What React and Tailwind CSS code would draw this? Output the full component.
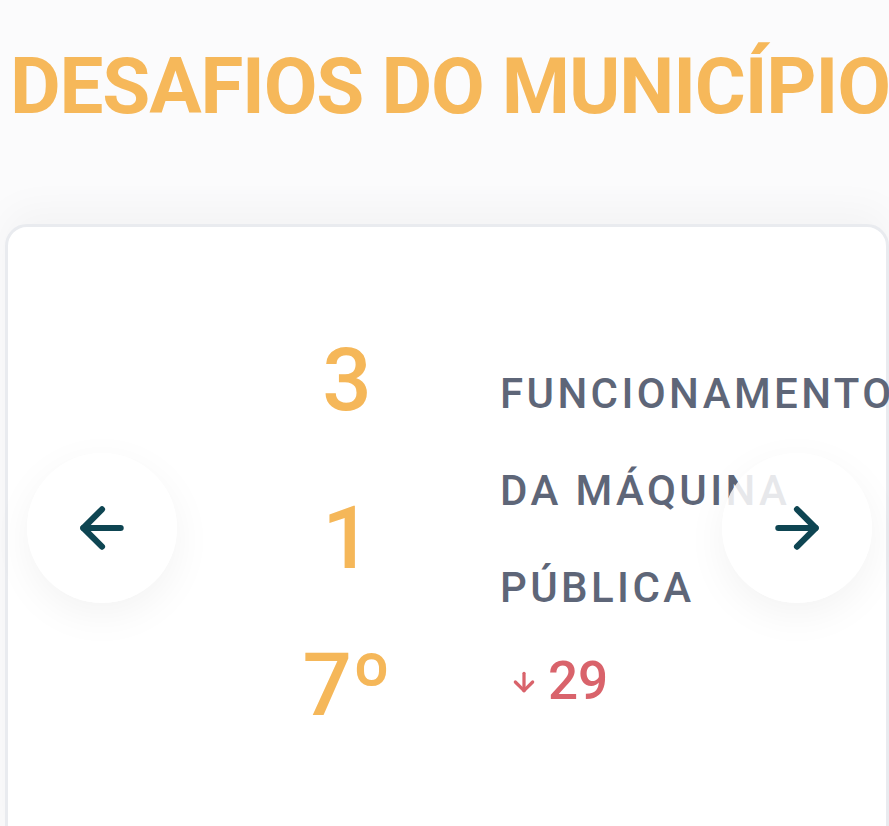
import React from "react";

function ArrowLeftIcon() {
  return (
    <svg width="64" height="64" viewBox="0 0 24 24" fill="none" stroke="#0e4552" strokeWidth="2.3" strokeLinecap="round" strokeLinejoin="round">
      <path d="M19 12H5" />
      <path d="M12 19l-7-7 7-7" />
    </svg>
  );
}

function ArrowRightIcon() {
  return (
    <svg width="64" height="64" viewBox="0 0 24 24" fill="none" stroke="#0e4552" strokeWidth="2.3" strokeLinecap="round" strokeLinejoin="round">
      <path d="M5 12h14" />
      <path d="M12 5l7 7-7 7" />
    </svg>
  );
}

function DownIcon() {
  return (
    <svg width="26" height="22" viewBox="0 0 24 20" fill="none" stroke="#d9636b" strokeWidth="3" strokeLinecap="round" strokeLinejoin="round">
      <path d="M12 2v16" />
      <path d="M4 10l8 8 8-8" />
    </svg>
  );
}

export default function App() {
  return (
    <div className="relative h-[826px] w-[889px] overflow-hidden bg-[#fbfbfc]" style={{ fontFamily: "Roboto, 'Noto Sans', sans-serif" }}>
      <h1 className="whitespace-nowrap pl-[10px] pt-[48px] text-[78px] font-bold leading-none tracking-[-1.15px] text-[#f6b85a]">
        DESAFIOS DO MUNICÍPIO
      </h1>

      <div className="relative mt-[98px] ml-[5px] h-[640px] w-[884px] rounded-[22px] border-[3px] border-[#e9ebef] bg-white shadow-[0_-14px_40px_rgba(0,0,0,0.035)]">
        <div className="flex">
          <div className="ml-[261px] flex w-[156px] shrink-0 flex-col items-center pt-[110px] font-medium leading-none text-[#f5b759]">
            <span className="text-[87px] leading-none">3</span>
            <span className="mt-[71px] text-[87px] leading-none">1</span>
            <span className="mt-[60px] text-[87px] leading-none">7º</span>
          </div>
          <div className="ml-[75px] flex shrink-0 flex-col pt-[118px]">
            <span className="whitespace-nowrap text-[42px] font-medium leading-[97px] tracking-[3.4px] text-[#5e6678]">FUNCIONAMENTO</span>
            <span className="whitespace-nowrap text-[42px] font-medium leading-[97px] tracking-[3.4px] text-[#5e6678]">DA MÁQUINA</span>
            <span className="whitespace-nowrap text-[42px] font-medium leading-[97px] tracking-[3.4px] text-[#5e6678]">PÚBLICA</span>
            <div className="mt-[19px] flex items-center gap-[11px] pl-[11px]">
              <DownIcon />
              <span className="text-[53px] font-medium leading-none text-[#d9636b]">29</span>
            </div>
          </div>
        </div>

        <button className="absolute left-[19px] top-[226px] flex h-[150px] w-[150px] items-center justify-center rounded-full bg-white/90 shadow-[0_12px_40px_rgba(0,0,0,0.05)]">
          <ArrowLeftIcon />
        </button>
        <button className="absolute left-[714px] top-[226px] flex h-[150px] w-[150px] items-center justify-center rounded-full bg-white/85 shadow-[0_12px_40px_rgba(0,0,0,0.05)]">
          <ArrowRightIcon />
        </button>
      </div>
    </div>
  );
}
